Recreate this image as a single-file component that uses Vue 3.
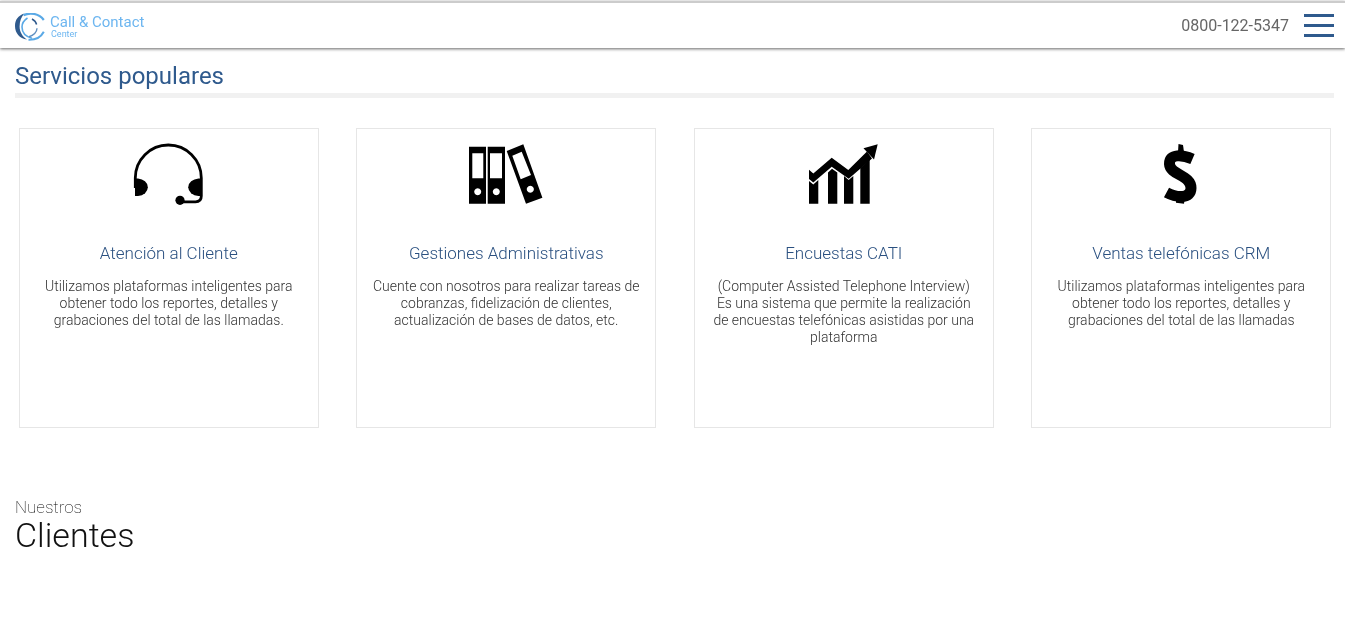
<template>
  <div class="page">
    <header class="topbar">
      <div class="logo">
        <svg width="31" height="28" viewBox="0 0 31 28" fill="none">
          <path fill="#2f5a8d" d="M9.5 .6C3 2.5 0 7 0 13C0 20 4.5 25.5 12 26.6C8 24 4.6 19.5 4.6 13.5C4.6 8 6.5 3.5 9.5 .6Z" />
          <path d="M12.5 5C8.7 7.5 7 10.5 7 14C7 19 10.5 23.5 17 25.3" stroke="#5aa9e6" stroke-width="1.6" />
          <path d="M8.5 2.3C15 -1 24 .5 28.8 7" stroke="#5aa9e6" stroke-width="2.2" />
          <path d="M28.8 18.7C26 24 20 27 13.5 26.8" stroke="#5aa9e6" stroke-width="2" />
          <path d="M17 6C19.5 7.3 21 9 21.6 11.5" stroke="#2f5a8d" stroke-width="1.5" />
          <path d="M22 15.3C22 19 18.5 22.5 14 23.7" stroke="#5f8fc0" stroke-width="1.4" />
        </svg>
        <div class="logo-text">
          <span class="logo-name">Call &amp; Contact</span>
          <span class="logo-sub">Center</span>
        </div>
      </div>
      <div class="topbar-right">
        <span class="phone">0800-122-5347</span>
        <div class="burger"><i></i><i></i><i></i></div>
      </div>
    </header>

    <section class="popular">
      <h2>Servicios populares</h2>
      <div class="rule"></div>
    </section>

    <div class="cards">
      <article v-for="s in services" :key="s.title" class="card">
        <svg class="icon" width="100" height="80" viewBox="0 0 100 80">
          <g v-if="s.icon === 'headset'">
            <path d="M16.3 53V43A33 33 0 0 1 82.3 43V61Q82.3 66.8 76.5 66.8H61" fill="none" stroke="#000" stroke-width="2.8" />
            <path d="M19 43.5A11 8.8 0 0 1 19 61H16V43.5Z" />
            <path d="M79.5 43.5A11.5 8.8 0 0 0 79.5 61H81V43.5Z" />
            <circle cx="61" cy="65.3" r="4.6" />
          </g>
          <g v-else-if="s.icon === 'binders'">
            <path fill-rule="evenodd" d="M13 11.7H30V68.8H13ZM16.3 18.3V43.3H27.3V18.3ZM21.7 53.2a3.5 3.5 0 1 0 .01 0Z" />
            <path fill-rule="evenodd" d="M31.7 11.7H49V68.8H31.7ZM34 18.3V43.3H46V18.3ZM40.3 53.2a3.5 3.5 0 1 0 .01 0Z" />
            <path fill-rule="evenodd" d="M50.7 16L67.3 9.3L86.4 62.7L70 68.8ZM56.3 20.7L65.7 16.7L75 40L64.7 44.3ZM74.3 50.8a3.5 3.5 0 1 0 .01 0Z" />
          </g>
          <g v-else-if="s.icon === 'chart'">
            <path d="M15 34.8L19.3 38.4L37.7 22.8L54.3 35L73 16.5L78 23.5L54.7 43.8L37.7 31.8L19.3 47.5L15 44Z" />
            <path d="M69.5 13.3L83.7 9.3L80 24.5Z" />
            <path d="M15 46L19.3 49.5L24.3 45V68.8H15Z" />
            <path d="M34 37.5L38 33.8L43.3 37.5V68.8H34Z" />
            <path d="M50 41L54.7 45L59.3 41V68.8H50Z" />
            <path d="M66.3 33L75.7 24.5V68.8H66.3Z" />
          </g>
          <g v-else>
            <path d="M61.5 24C52 20 38 18 38.5 29C39 40 60 40 60 53C60 64 46 63 35.5 57.5" fill="none" stroke="#000" stroke-width="11" />
            <path d="M47.5 9L52 10L53 17H47Z" />
            <path d="M45 61H54L53 68.8L45 67.8Z" />
          </g>
        </svg>
        <h3>{{ s.title }}</h3>
        <p>
          <template v-for="(line, i) in s.lines" :key="i">{{ line }}<br /></template>
        </p>
      </article>
    </div>

    <section class="clients">
      <span class="clients-small">Nuestros</span>
      <span class="clients-big">Clientes</span>
    </section>
  </div>
</template>

<script setup>
const services = [
  {
    title: 'Atención al Cliente',
    icon: 'headset',
    lines: ['Utilizamos plataformas inteligentes para', 'obtener todo los reportes, detalles y', 'grabaciones del total de las llamadas.']
  },
  {
    title: 'Gestiones Administrativas',
    icon: 'binders',
    lines: ['Cuente con nosotros para realizar tareas de', 'cobranzas, fidelización de clientes,', 'actualización de bases de datos, etc.']
  },
  {
    title: 'Encuestas CATI',
    icon: 'chart',
    lines: ['(Computer Assisted Telephone Interview)', 'Es una sistema que permite la realización', 'de encuestas telefónicas asistidas por una', 'plataforma']
  },
  {
    title: 'Ventas telefónicas CRM',
    icon: 'dollar',
    lines: ['Utilizamos plataformas inteligentes para', 'obtener todo los reportes, detalles y', 'grabaciones del total de las llamadas']
  }
]
</script>

<style>
html, body {
  background: #fff;
  overflow: hidden;
}
</style>

<style scoped>
.page {
  font-family: Roboto, "Liberation Sans", sans-serif;
  height: 617px;
  overflow: hidden;
  color: #222;
  will-change: transform;
}
.topbar {
  height: 45px;
  border-top: 2px solid #ccc;
  margin-top: 1px;
  padding: 0 11px 0 15px;
  display: flex;
  align-items: center;
  justify-content: space-between;
  box-shadow: 0 1px 3px rgba(0, 0, 0, 0.6);
}
.logo {
  display: flex;
  align-items: center;
  gap: 4px;
  margin-top: 3px;
}
.logo-text {
  display: flex;
  flex-direction: column;
  margin-top: -1px;
}
.logo-name {
  font-size: 15px;
  line-height: 15px;
  color: #6db6f0;
}
.logo-sub {
  font-size: 9px;
  line-height: 9px;
  color: #6db6f0;
  margin-left: 1px;
}
.topbar-right {
  display: flex;
  align-items: center;
  gap: 15px;
}
.phone {
  font-size: 16px;
  color: #666;
}
.burger {
  width: 30px;
  display: flex;
  flex-direction: column;
  gap: 7px;
}
.burger i {
  display: block;
  height: 3px;
  background: #2f5a8d;
}
.popular {
  padding: 0 11px 0 15px;
}
.popular h2 {
  margin: 14px 0 0;
  font-size: 24px;
  line-height: 28px;
  font-weight: 400;
  color: #2f5a8d;
}
.rule {
  height: 5px;
  margin-top: 3px;
  background: #f1f1f1;
}
.cards {
  display: flex;
  gap: 37.5px;
  padding-left: 18.75px;
  margin-top: 30px;
}
.card {
  width: 300px;
  height: 300px;
  flex: none;
  box-sizing: border-box;
  border: 1px solid #e6e6e6;
  padding: 6px 15px 0;
  text-align: center;
}
.icon {
  display: block;
  margin: 0 auto;
}
.card h3 {
  margin: 27px 0 0;
  font-size: 17px;
  line-height: 22px;
  font-weight: 300;
  color: #2a5080;
}
.card p {
  margin: 14px -8px 0;
  font-size: 14px;
  line-height: 17px;
  font-weight: 300;
  color: #333;
}
.clients {
  padding-left: 15px;
  margin-top: 70px;
  display: flex;
  flex-direction: column;
  color: #111;
}
.clients-small {
  font-size: 17px;
  line-height: 19px;
  font-weight: 100;
  color: #000;
}
.clients-big {
  font-size: 34px;
  line-height: 36px;
  font-weight: 300;
}
</style>
